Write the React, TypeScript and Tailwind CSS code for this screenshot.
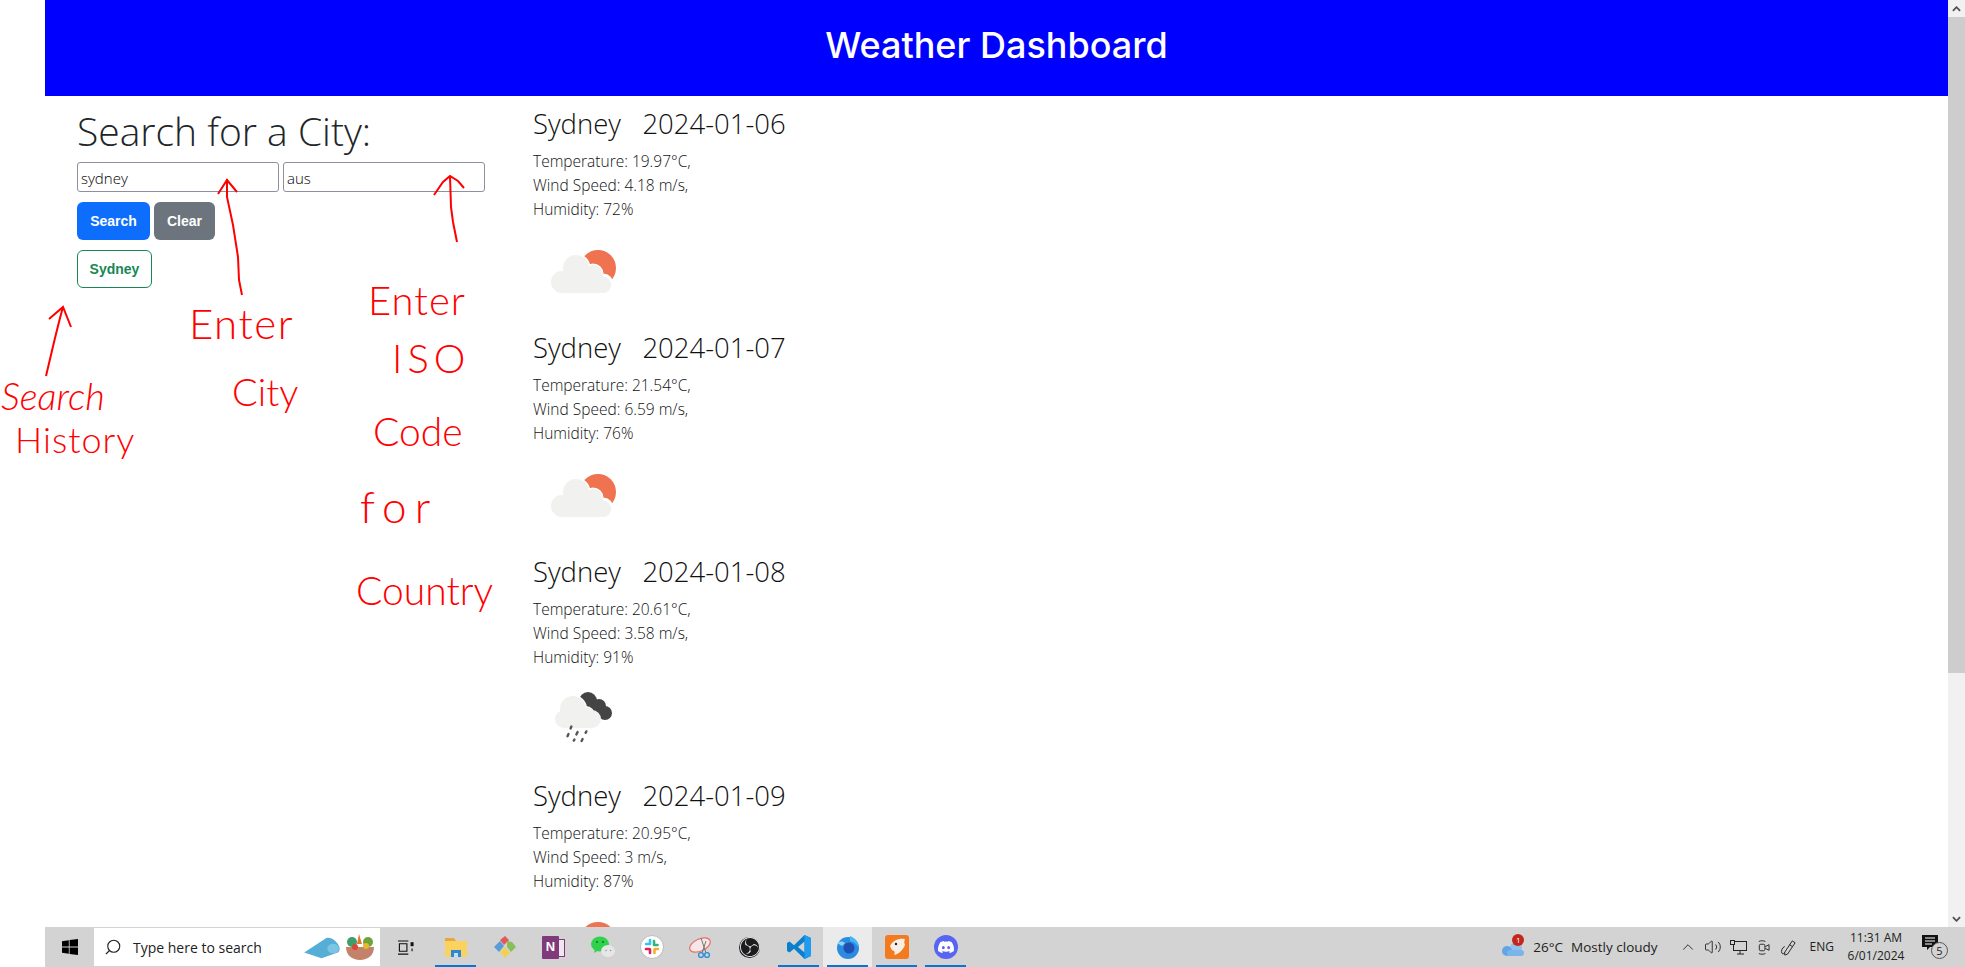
import { ChevronUp, Search as SearchIcon, Volume2 } from "lucide-react";
import { SiDiscord, SiObsstudio } from "react-icons/si";

const font = "font-['Open_Sans',sans-serif]";

const forecast = [
  { date: "2024-01-06", temp: "19.97", wind: "4.18", humidity: "72", rain: false },
  { date: "2024-01-07", temp: "21.54", wind: "6.59", humidity: "76", rain: false },
  { date: "2024-01-08", temp: "20.61", wind: "3.58", humidity: "91", rain: true },
  { date: "2024-01-09", temp: "20.95", wind: "3", humidity: "87", rain: false },
];

function CloudSun() {
  return (
    <svg viewBox="0 0 100 100" className="w-[100px] h-[100px]">
      <circle cx="65" cy="47" r="18" fill="#ef7350" />
      <g fill="#f1f1ef" stroke="#fff" strokeWidth="3">
        <circle cx="43" cy="47" r="13" />
        <circle cx="60" cy="53" r="9" />
        <circle cx="70" cy="63" r="9" />
      </g>
      <g fill="#f1f1ef">
        <circle cx="43" cy="47" r="13" />
        <circle cx="60" cy="53" r="9" />
        <circle cx="70" cy="64" r="8" />
        <circle cx="29" cy="61" r="11" />
        <rect x="29" y="52" width="41" height="20" />
      </g>
    </svg>
  );
}

function CloudRain() {
  return (
    <svg viewBox="0 0 100 100" className="w-[100px] h-[100px]">
      <g fill="#444">
        <circle cx="55" cy="32" r="9" />
        <circle cx="66" cy="37" r="7" />
        <circle cx="72" cy="44" r="7" />
        <rect x="55" y="35" width="14" height="12" />
      </g>
      <g fill="#f1f1ef" stroke="#fff" strokeWidth="2">
        <circle cx="40" cy="40" r="13" />
        <circle cx="53" cy="46" r="8" />
      </g>
      <g fill="#f1f1ef">
        <circle cx="40" cy="40" r="13" />
        <circle cx="53" cy="46" r="8" />
        <circle cx="31" cy="50" r="9" />
        <circle cx="59" cy="50" r="9" />
        <rect x="31" y="44" width="28" height="15" />
      </g>
      <g stroke="#555" strokeWidth="2.4" strokeLinecap="round">
        <path d="M38.4 57.6l-.8 1.8" />
        <path d="M44.6 63l-1.2 2.4" />
        <path d="M53.4 62.4l-.8 1.4" />
        <path d="M35.5 65l-1 2.2" />
        <path d="M41.4 70.6l-.6 1" />
        <path d="M49.6 70l-1 2" />
      </g>
    </svg>
  );
}

function TaskButton({ children, active, open, wide }: { children: React.ReactNode; active?: boolean; open?: boolean; wide?: boolean }) {
  return (
    <div className={`relative h-10 flex items-center justify-center ${wide ? "w-[51px]" : "w-[49px]"} ${active ? "bg-[#ebebeb]" : ""}`}>
      {children}
      {open && <span className="absolute bottom-0 left-1 right-1 h-[2px] bg-[#0078d4]" />}
    </div>
  );
}

function Taskbar() {
  return (
    <div className={`h-10 shrink-0 bg-[#d3d3d3] flex items-center ${font}`}>
      <div className="w-[49px] flex justify-center">
        <svg viewBox="0 0 16 16" className="w-4 h-4" fill="#000">
          <path d="M0 2.2l6.8-1v6.4H0zM7.6 1.1L16 0v7.6H7.6zM0 8.4h6.8v6.4L0 13.8zM7.6 8.4H16V16l-8.4-1.1z" />
        </svg>
      </div>
      <div className="w-[286px] h-[38px] bg-white flex items-center pl-[10px] relative">
        <SearchIcon className="w-[18px] h-[18px] -scale-x-100 text-[#222]" strokeWidth={1.5} />
        <span className="ml-[11px] text-[14px] text-[#222]">Type here to search</span>
        <svg viewBox="0 0 40 28" className="absolute left-[209px] top-[8px] w-[39px] h-[27px]">
          <path d="M1 17L24 2c3-1 8 1 11 5 3 4 4 8 1 10L19 23z" fill="#56aed6" />
          <ellipse cx="31" cy="13" rx="6" ry="5" fill="#7cc4e4" />
        </svg>
        <svg viewBox="0 0 32 32" className="absolute left-[250px] top-[3px] w-8 h-8">
          <circle cx="8" cy="11" r="5" fill="#3f9e6b" />
          <circle cx="24" cy="11" r="5" fill="#6ea53a" />
          <path d="M15 3l3 10h-5z" fill="#e0762f" />
          <path d="M2 16h28c0 8-6 13-14 13S2 24 2 16z" fill="#c4826a" />
          <circle cx="11" cy="16" r="3" fill="#d9483b" />
          <circle cx="22" cy="15" r="3" fill="#e7b92f" />
        </svg>
      </div>
      <TaskButton wide>
        <svg viewBox="0 0 18 16" className="w-[17px] h-[15px]" fill="none" stroke="#111" strokeWidth="1.2">
          <path d="M1 1h11M1 15h11M2.500 4h8v8h-8z" />
          <rect x="15" y="3" width="2" height="3" fill="#111" />
          <path d="M16 9v3" />
        </svg>
      </TaskButton>
      <TaskButton open>
        <svg viewBox="0 0 24 22" className="w-6 h-[22px]">
          <path d="M1 2h9l2 3H1z" fill="#e8a73a" />
          <rect x="1" y="5" width="22" height="16" fill="#fbd25e" />
          <path d="M7 14h10v7H7z" fill="#2d87d3" />
          <path d="M10 17h4v4h-4z" fill="#bde0f5" />
        </svg>
      </TaskButton>
      <TaskButton>
        <svg viewBox="0 0 24 24" className="w-6 h-6">
          <path d="M7 5l5-4 4 4-5 5z" fill="#e2595b" />
          <path d="M1 12l6-6 4 5-5 6z" fill="#5a9bd8" />
          <path d="M14 6l5 1 4 5-5 5-4-5z" fill="#86bf5a" />
          <path d="M7 17l5-5 5 6-5 5z" fill="#f1d155" />
        </svg>
      </TaskButton>
      <TaskButton>
        <div className="relative w-[23px] h-[23px]">
          <div className="absolute right-0 top-[3px] w-[14px] h-[18px] bg-[#efe6f2] border border-[#80397b]" />
          <div className="absolute left-0 top-0 w-[17px] h-[23px] bg-[#80397b] flex items-center justify-center rounded-[1px]">
            <span className="text-white text-[13px] font-bold font-['Liberation_Sans',sans-serif]">N</span>
          </div>
        </div>
      </TaskButton>
      <TaskButton>
        <svg viewBox="0 0 24 24" className="w-6 h-6">
          <ellipse cx="9" cy="9" rx="9" ry="7.500" fill="#2fd24a" />
          <path d="M4 14l-1 4 5-3z" fill="#2fd24a" />
          <ellipse cx="17" cy="16" rx="7" ry="6" fill="#e6e6e6" />
          <circle cx="6" cy="7" r="1" fill="#136b26" />
          <circle cx="12" cy="7" r="1" fill="#136b26" />
          <circle cx="15" cy="15.500" r=".8" fill="#999" />
          <circle cx="19.500" cy="15.500" r=".8" fill="#999" />
        </svg>
      </TaskButton>
      <TaskButton>
        <svg viewBox="0 0 24 24" className="w-6 h-6">
          <circle cx="12" cy="12" r="11.500" fill="#fff" stroke="#bbb" />
          <g strokeWidth="2.600" strokeLinecap="round" fill="none">
            <path d="M10 5v4M9 9H6" stroke="#36c5f0" />
            <path d="M14 6v4M14 10h3.500" stroke="#2eb67d" />
            <path d="M15 14h3M14.500 14.500v3.500" stroke="#ecb22e" />
            <path d="M6 14h3.500M10 14.500v3.500" stroke="#e01e5a" />
          </g>
        </svg>
      </TaskButton>
      <TaskButton>
        <svg viewBox="0 0 24 24" className="w-6 h-6" fill="none">
          <ellipse cx="11" cy="10" rx="11" ry="6" transform="rotate(-25 11 10)" stroke="#e3726c" strokeWidth="1.2" fill="#f6e7e6" />
          <path d="M12 3l5 15M17 6L13 18" stroke="#777" strokeWidth="1" />
          <circle cx="18" cy="20" r="2.400" stroke="#2f8fd8" strokeWidth="1.400" />
          <circle cx="12" cy="20" r="2.400" stroke="#2f8fd8" strokeWidth="1.400" />
        </svg>
      </TaskButton>
      <TaskButton>
        <div className="w-[21px] h-[21px] rounded-full bg-[#1c1c1e] flex items-center justify-center">
          <SiObsstudio className="w-[20px] h-[20px] text-[#e8e8e8]" />
        </div>
      </TaskButton>
      <TaskButton open>
        <svg viewBox="0 0 24 24" className="w-6 h-6">
          <path d="M17.500 0L24 3v18l-6.500 3L7 13.800 2.500 17.500 0 16V8l2.500-1.500L7 10.200z" fill="#0a7fcb" />
          <path d="M17.500 6.500L11 12l6.500 5.500z" fill="#d3d3d3" />
          <path d="M17.500 0L24 3v18l-6.500 3z" fill="#1f9cf0" />
        </svg>
      </TaskButton>
      <TaskButton active open>
        <svg viewBox="0 0 24 24" className="w-6 h-6">
          <circle cx="12" cy="13" r="11" fill="#2b8be0" />
          <path d="M14 1c5 2 9 6 9 12-2-3-4-6-9-7z" fill="#45b6f3" />
          <circle cx="13" cy="13" r="5.500" fill="#1f4fb0" />
          <path d="M1 8c3-2 6-2 8 0l-3 3z" fill="#8fd3f8" />
        </svg>
      </TaskButton>
      <TaskButton open>
        <svg viewBox="0 0 24 24" className="w-6 h-6">
          <rect width="24" height="24" rx="3" fill="#f47a20" />
          <path d="M5 11c3-6 9-8 15-7-1 2-1 4 0 6-2 5-6 9-11 10 1-2 1-3 0-4-2 0-3-3-4-5z" fill="#f7efe5" />
          <circle cx="11" cy="9" r="1.200" fill="#222" />
        </svg>
      </TaskButton>
      <TaskButton open>
        <div className="w-6 h-6 rounded-full bg-[#5865f2] flex items-center justify-center">
          <SiDiscord className="w-4 h-4 text-white" />
        </div>
      </TaskButton>
      <div className="flex-1" />
      <div className="flex items-center text-[#222] text-[13.5px] shrink-0">
        <div className="relative w-6 h-5 mr-2">
          <svg viewBox="0 0 24 20" className="w-6 h-5">
            <circle cx="15" cy="11" r="6" fill="#8fc1ec" />
            <circle cx="6" cy="14" r="5" fill="#5fa6e6" />
            <rect x="6" y="13" width="17" height="6" rx="3" fill="#7ab4ea" />
          </svg>
          <span className="absolute -top-[3px] left-[11px] w-[12px] h-[12px] rounded-full bg-[#c4261d] text-white text-[8px] leading-[12px] text-center">1</span>
        </div>
        <span>26°C</span>
        <span className="ml-[8px]">Mostly cloudy</span>
        <ChevronUp className="w-[18px] h-[18px] ml-[21px]" strokeWidth={1.2} />
        <Volume2 className="w-[18px] h-[18px] ml-[7px]" strokeWidth={1.2} />
        <svg viewBox="0 0 18 16" className="w-[18px] h-4 ml-[7px]" fill="none" stroke="#222">
          <rect x="4.500" y="2.500" width="13" height="9" />
          <path d="M8 15h7M11 12v3" />
          <rect x="1.500" y="1.500" width="4" height="4" fill="#d3d3d3" />
        </svg>
        <svg viewBox="0 0 14 18" className="w-[13px] h-[17px] ml-[10px]" fill="none" stroke="#222">
          <rect x="2.500" y="5.500" width="6" height="7" rx="1.500" />
          <path d="M9 8l4-2v6l-4-2M2 2.500c2-1 5-1 7 0M2 15.500c2 1 5 1 7 0" />
        </svg>
        <svg viewBox="0 0 18 18" className="w-[17px] h-[17px] ml-[10px]" fill="none" stroke="#222">
          <path d="M5 14L13 2l3 2-8 12-3 1zM10 6l3 2" />
          <path d="M5 8c-3 1-4 5-3 7 1 1 2 1 3-1" />
        </svg>
        <span className="ml-[13px] text-[12px]">ENG</span>
        <div className="ml-4 text-[12px] leading-[18px] text-center w-[52px] whitespace-nowrap flex flex-col items-center">
          <div>11:31 AM</div>
          <div>6/01/2024</div>
        </div>
        <div className="relative w-[26px] h-6 ml-[20px] mr-[17px]">
          <svg viewBox="0 0 16 16" className="absolute left-0 top-0 w-4 h-4" fill="#111">
            <path d="M0 0h16v12H8l-3 3v-3H0z" />
            <path d="M3 3h10M3 6h10M3 9h7" stroke="#fff" />
          </svg>
          <span className="absolute right-0 bottom-0 w-[17px] h-[17px] rounded-full border border-[#555] bg-[#d3d3d3] text-[11px] leading-[15px] text-center">5</span>
        </div>
      </div>
    </div>
  );
}

function Annotations() {
  return (
    <div className="absolute inset-0 pointer-events-none overflow-hidden text-[#ff0000] font-['Lato',sans-serif] font-light">
      <svg viewBox="0 0 520 640" className="absolute left-0 top-0 w-[520px] h-[640px]" fill="none" stroke="#ff0000" strokeWidth="2">
        <path d="M46 376L55 338L60 318L63 307M49 319L63 307L71 327" />
        <path d="M242 295L239 280L238 257L233 225L227 197L227 179M218 194L227 180L237 192" />
        <path d="M457 242L453 222L451 207L450 176M434 195L443 182L450 176L458 181L464 188" />
      </svg>
      <span className="absolute left-[189px] top-[298px] text-[42px] leading-[50px] tracking-[1.5px]">Enter</span>
      <span className="absolute left-[232px] top-[368px] text-[38px] leading-[46px]">City</span>
      <span className="absolute left-[368px] top-[276px] text-[40px] leading-[48px] tracking-[1px]">Enter</span>
      <span className="absolute left-[392px] top-[334px] text-[40px] leading-[48px] tracking-[5px]">ISO</span>
      <span className="absolute left-[373px] top-[406px] text-[39px] leading-[50px]">Code</span>
      <span className="absolute left-[360px] top-[481px] text-[44px] leading-[50px] tracking-[8px]">for</span>
      <span className="absolute left-[356px] top-[565px] text-[39px] leading-[50px]">Country</span>
      <span className="absolute left-[1px] top-[374px] text-[38px] leading-[42px] italic">Search</span>
      <span className="absolute left-[15px] top-[418px] text-[36px] leading-[42px] tracking-[1px]">History</span>
    </div>
  );
}

export default function App() {
  return (
    <div className={`relative h-screen flex bg-white overflow-hidden text-[#212529] ${font}`}>
      <div className="w-[45px] shrink-0" />
      <div className="flex-1 min-w-0 flex flex-col">
        <div className="flex-1 min-h-0 flex">
          <div className="flex-1 min-w-0 overflow-hidden">
            <header className="h-24 bg-[#0000ff] flex items-center justify-center pb-[6px]">
              <h1 className="text-white text-[36px] font-['Inter',sans-serif] font-medium">Weather Dashboard</h1>
            </header>
            <div className="flex">
              <aside className="w-[488px] shrink-0 pl-8 pt-[11px]">
                <h2 className="text-[39px] leading-[48px] font-light">Search for a City:</h2>
                <div className="flex gap-1 mt-[7px]">
                  <input readOnly value="sydney" className="w-[202px] h-[30px] border border-[#8f8f9d] rounded-[3px] px-[3px] pt-[2px] text-[15px] font-light text-black" />
                  <input readOnly value="aus" className="w-[202px] h-[30px] border border-[#8f8f9d] rounded-[3px] px-[3px] pt-[2px] text-[15px] font-light text-black" />
                </div>
                <div className="flex gap-1 mt-[10px] font-['Liberation_Sans',sans-serif] text-[14px] font-bold">
                  <button className="w-[73px] h-[38px] rounded-[6px] bg-[#0d6efd] text-white">Search</button>
                  <button className="w-[61px] h-[38px] rounded-[6px] bg-[#6c757d] text-white">Clear</button>
                </div>
                <button className="mt-[10px] w-[75px] h-[38px] rounded-[6px] border border-[#198754] text-[#198754] font-['Liberation_Sans',sans-serif] text-[14px] font-bold">Sydney</button>
              </aside>
              <main className="flex flex-col gap-[10px] pt-[11px]">
                {forecast.map((day) => (
                  <section key={day.date}>
                    <h3 className="text-[27.5px] leading-[34px] font-light text-[#111] mb-2 whitespace-pre">{`Sydney   ${day.date}`}</h3>
                    <p className="text-[15.5px] leading-6 font-light text-[#111]">
                      Temperature: {day.temp}°C,
                      <br />
                      Wind Speed: {day.wind} m/s,
                      <br />
                      Humidity: {day.humidity}%
                    </p>
                    {day.rain ? <CloudRain /> : <CloudSun />}
                  </section>
                ))}
              </main>
            </div>
          </div>
          <div className="w-[17px] shrink-0 bg-[#f1f1f1] flex flex-col">
            <div className="h-[17px] flex items-center justify-center">
              <svg viewBox="0 0 10 6" className="w-[9px] h-[6px]" fill="none" stroke="#505050" strokeWidth="2">
                <path d="M1 5l4-4 4 4" />
              </svg>
            </div>
            <div className="h-[656px] bg-[#cdcdcd]" />
            <div className="flex-1" />
            <div className="h-[17px] flex items-center justify-center">
              <svg viewBox="0 0 10 6" className="w-[9px] h-[6px]" fill="none" stroke="#505050" strokeWidth="2">
                <path d="M1 1l4 4 4-4" />
              </svg>
            </div>
          </div>
        </div>
        <Taskbar />
      </div>
      <Annotations />
    </div>
  );
}
